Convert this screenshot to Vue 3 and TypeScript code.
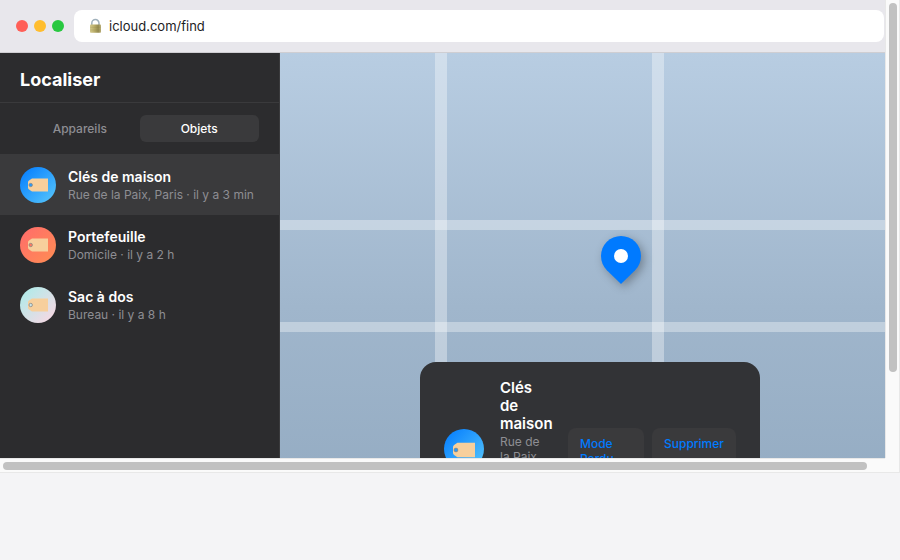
<script setup lang="ts">
import { ref, computed } from 'vue'

interface TrackedItem {
  name: string
  place: string
  seen: string
  tone: 'blue' | 'coral' | 'pastel'
}

const items: TrackedItem[] = [
  { name: 'Clés de maison', place: 'Rue de la Paix, Paris', seen: 'il y a 3 min', tone: 'blue' },
  { name: 'Portefeuille', place: 'Domicile', seen: 'il y a 2 h', tone: 'coral' },
  { name: 'Sac à dos', place: 'Bureau', seen: 'il y a 8 h', tone: 'pastel' },
]

const tabs = ['Appareils', 'Objets']
const activeTab = ref('Objets')
const selectedIndex = ref(0)
const selected = computed(() => items[selectedIndex.value])
</script>

<template>
  <div class="frame">
    <div class="viewport">
      <div class="page">
        <header class="toolbar">
          <div class="lights"><i class="red"></i><i class="yellow"></i><i class="green"></i></div>
          <div class="address">
            <svg class="lock" viewBox="0 0 15 16" aria-hidden="true">
              <defs>
                <linearGradient id="lock-body" x1="0" x2="1">
                  <stop offset="0" stop-color="#d2c88c" />
                  <stop offset="0.35" stop-color="#bdb16c" />
                  <stop offset="0.75" stop-color="#958b50" />
                  <stop offset="1" stop-color="#bcb17a" />
                </linearGradient>
              </defs>
              <path d="M3.8 8V5.2a3.6 3.6 0 0 1 7.2 0V8" fill="none" stroke="#9fb0bb" stroke-width="1.5" />
              <rect x="2" y="6.6" width="11" height="8.2" rx="0.8" fill="url(#lock-body)" />
              <path d="M2.2 9.4h10.6M2.2 12h10.6" stroke="#7b7240" stroke-width="0.4" opacity="0.4" />
            </svg>
            <span>icloud.com/find</span>
          </div>
        </header>
        <div class="app">
          <aside class="sidebar">
            <h1>Localiser</h1>
            <nav class="tabs">
              <button
                v-for="tab in tabs"
                :key="tab"
                type="button"
                :class="{ active: tab === activeTab }"
                @click="activeTab = tab"
              >{{ tab }}</button>
            </nav>
            <button
              v-for="(item, index) in items"
              :key="item.name"
              type="button"
              class="item"
              :class="{ current: index === selectedIndex }"
              @click="selectedIndex = index"
            >
              <span class="avatar" :class="item.tone">
                <svg viewBox="0 0 20 14" aria-hidden="true">
                  <path d="M4 0.5H20V13.5H4L1 11.6Q0 10.8 0 9.8V4.2Q0 3.2 1 2.4ZM2.7 5.2a1.8 1.8 0 1 0 0 3.6a1.8 1.8 0 1 0 0-3.6Z" fill="#f7cf9c" fill-rule="evenodd" />
                  <circle cx="2.7" cy="7" r="1.7" fill="none" stroke="#8b8984" stroke-width="0.8" />
                </svg>
              </span>
              <span class="details">
                <span class="name">{{ item.name }}</span>
                <span class="meta">{{ item.place }} · {{ item.seen }}</span>
              </span>
            </button>
          </aside>
          <main class="map">
            <div class="road across first"></div>
            <div class="road across second"></div>
            <div class="road down left"></div>
            <div class="road down right"></div>
            <svg class="pin" viewBox="0 0 40 48" aria-hidden="true">
              <path d="M20 48L5.86 34.14A20 20 0 1 1 34.14 34.14Z" fill="#007aff" />
              <circle cx="20" cy="20" r="7" fill="#fff" />
            </svg>
            <section class="card">
              <span class="avatar large" :class="selected.tone">
                <svg viewBox="0 0 20 14" aria-hidden="true">
                  <path d="M4 0.5H20V13.5H4L1 11.6Q0 10.8 0 9.8V4.2Q0 3.2 1 2.4ZM2.7 5.2a1.8 1.8 0 1 0 0 3.6a1.8 1.8 0 1 0 0-3.6Z" fill="#f7cf9c" fill-rule="evenodd" />
                  <circle cx="2.7" cy="7" r="1.7" fill="none" stroke="#8b8984" stroke-width="0.8" />
                </svg>
              </span>
              <div class="summary">
                <h2>{{ selected.name }}</h2>
                <p>{{ selected.place }} · {{ selected.seen }}</p>
              </div>
              <div class="actions">
                <button type="button">Mode Perdu</button>
                <button type="button">Supprimer</button>
              </div>
            </section>
          </main>
        </div>
      </div>
    </div>
    <div class="bar vertical"><div class="thumb"></div></div>
    <div class="bar horizontal"><div class="thumb"></div></div>
    <div class="corner"></div>
  </div>
</template>

<style>
body {
  margin: 0;
  background: #f4f4f6;
}
</style>

<style scoped>
* {
  box-sizing: border-box;
}
.frame {
  display: grid;
  grid-template-columns: 1fr 15px;
  grid-template-rows: 458px 15px;
  font-family: Inter, "Liberation Sans", sans-serif;
}
.viewport {
  overflow: hidden;
  min-width: 0;
}
.page {
  display: flex;
  flex-direction: column;
  width: calc(100% + 15px);
  height: 560px;
}
.toolbar {
  display: flex;
  align-items: center;
  gap: 10px;
  padding: 10px 16px;
  background: #e8e7ec;
  border-bottom: 1px solid #cfced2;
}
.lights {
  display: flex;
  gap: 6px;
}
.lights i {
  width: 12px;
  height: 12px;
  border-radius: 50%;
}
.red { background: #ff5f57; }
.yellow { background: #ffbd2e; }
.green { background: #28c840; }
.address {
  display: flex;
  flex: 1;
  align-items: center;
  gap: 6px;
  height: 32px;
  padding: 0 14px;
  border-radius: 8px;
  background: #fff;
  color: #1d1d1f;
  font-size: 13px;
}
.lock {
  width: 15px;
  height: 16px;
}
.app {
  display: flex;
  flex: 1;
  min-height: 0;
}
.sidebar {
  display: flex;
  flex-direction: column;
  width: 280px;
  background: #2c2c2e;
  border-right: 1px solid #3a3a3c;
  color: #fff;
}
h1 {
  margin: 0;
  padding: 16px 20px 11px;
  border-bottom: 1px solid #3a3a3c;
  font-size: 18px;
  line-height: 22px;
  font-weight: 700;
}
button {
  margin: 0;
  border: 0;
  font-family: inherit;
  cursor: pointer;
}
.tabs {
  display: flex;
  padding: 12px 20px;
  border-bottom: 1px solid #3a3a3c;
}
.tabs button {
  flex: 1;
  padding: 6px 0;
  border-radius: 6px;
  background: transparent;
  color: #8e8e93;
  font-size: 12px;
  line-height: 15px;
  font-weight: 500;
}
.tabs .active {
  background: #3a3a3c;
  color: #fff;
}
.item {
  display: flex;
  align-items: center;
  gap: 12px;
  padding: 12px 20px;
  background: transparent;
  color: #fff;
  text-align: left;
}
.item.current {
  background: #3a3a3c;
}
.avatar {
  display: flex;
  flex: none;
  align-items: center;
  justify-content: center;
  width: 36px;
  height: 36px;
  border-radius: 50%;
}
.avatar svg {
  width: 20px;
  height: 14px;
}
.avatar.large {
  width: 40px;
  height: 40px;
  padding-top: 2px;
}
.avatar.large svg {
  width: 22px;
  height: 16px;
}
.blue { background: linear-gradient(135deg, #007aff, #5ac8fa); }
.coral { background: linear-gradient(135deg, #ff6b6b, #ff8e53); }
.pastel { background: linear-gradient(135deg, #a8edea, #fed6e3); }
.details {
  display: flex;
  flex-direction: column;
  gap: 2px;
  white-space: nowrap;
}
.name {
  font-size: 14px;
  line-height: 17px;
  font-weight: 600;
}
.meta {
  color: #8e8e93;
  font-size: 12px;
  line-height: 15px;
}
.map {
  position: relative;
  flex: 1;
  background: linear-gradient(180deg, #b8cde2 0%, #a0b6cc 50%, #90a8bf 100%);
}
.road {
  position: absolute;
  background: rgba(255, 255, 255, 0.35);
}
.across {
  left: 0;
  right: 0;
  height: 10px;
}
.down {
  top: 0;
  bottom: 0;
  width: 12px;
}
.first { top: 33%; }
.second { top: 53%; }
.left { left: 25%; }
.right { left: 60%; }
.pin {
  position: absolute;
  top: 183px;
  left: 55%;
  width: 40px;
  height: 48px;
  margin-left: -20px;
  overflow: visible;
  filter: drop-shadow(3px 3px 5px rgba(0, 0, 0, 0.3));
}
.card {
  position: absolute;
  bottom: 24px;
  left: 50%;
  display: flex;
  align-items: center;
  gap: 16px;
  width: 340px;
  height: 174px;
  margin-left: -170px;
  padding: 17px 24px 15px;
  border-radius: 16px;
  background: #323336;
  color: #fff;
}
.avatar.large,
.actions {
  margin-bottom: 2px;
}
.summary {
  flex: 1;
  align-self: flex-start;
  min-width: 0;
}
h2 {
  margin: 0;
  font-size: 15px;
  line-height: 18px;
  font-weight: 600;
}
p {
  margin: 0;
  color: #8e8e93;
  font-size: 12px;
  line-height: 15px;
}
h2 + p {
  margin-top: 1px;
}
.actions {
  display: grid;
  grid-template-columns: 76px 84px;
  gap: 8px;
}
.actions button {
  display: flex;
  align-items: flex-start;
  padding: 8px 12px 4px;
  border-radius: 8px;
  background: #3a3a3c;
  color: #007aff;
  font-size: 12px;
  line-height: 15px;
  font-weight: 500;
  text-align: left;
}
.bar,
.corner {
  background: #fafafa;
}
.vertical {
  padding: 3px 2px 0 3px;
  border: solid #e8e8e8;
  border-width: 0 1px;
}
.horizontal {
  padding: 3px 3px 0;
  border: solid #e8e8e8;
  border-width: 1px 0;
}
.corner {
  border: solid #e8e8e8;
  border-width: 0 1px 1px 0;
}
.thumb {
  border-radius: 4px;
  background: #c1c1c1;
}
.vertical .thumb {
  width: 8px;
  height: 81%;
}
.horizontal .thumb {
  width: calc(100% - 15px);
  height: 8px;
}
</style>
